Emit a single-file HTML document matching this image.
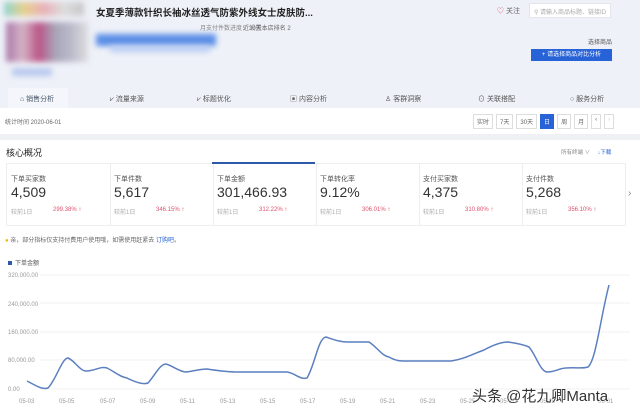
<!DOCTYPE html><html><head><meta charset="utf-8"><style>
*{margin:0;padding:0;box-sizing:border-box}
body{width:640px;height:413px;overflow:hidden;background:#fff;font-family:"Liberation Sans","Noto Sans CJK SC",sans-serif;color:#333;position:relative}
.a{position:absolute;white-space:nowrap}
.blk{position:absolute;filter:blur(3px)}
</style></head><body>
<div class="a" style="left:0;top:0;width:640px;height:108px;background:#eef1f8"></div>
<div class="blk" style="left:4px;top:2px;width:80px;height:14px;background:linear-gradient(90deg,#8fd3cf,#e6d08c,#e8b0b8,#ddd,#c7c7c7)"></div>
<div class="blk" style="left:6px;top:22px;width:82px;height:40px;background:linear-gradient(90deg,#a7a,#d5b5c5,#b58,#a8a5b8,#bbc,#ddd)"></div>
<div class="blk" style="left:12px;top:68px;width:40px;height:8px;background:#b8c8ee"></div>
<div class="blk" style="left:96px;top:34px;width:120px;height:12px;background:#5b8ee6"></div>
<div class="blk" style="left:110px;top:46px;width:100px;height:6px;background:#b8ccf3"></div>
<div class="a" style="left:96px;top:5px;font-size:9.5px;font-weight:bold;color:#222">女夏季薄款针织长袖冰丝透气防紫外线女士皮肤防...</div>
<div class="a" style="left:200px;top:23px;font-size:6px;color:#888">月支付件数进度： 设置</div>
<div class="a" style="left:243px;top:23px;font-size:6px;color:#666">近30天本店排名 2</div>
<div class="a" style="left:497px;top:6px;font-size:7px;color:#d55">♡ <span style="color:#666">关注</span></div>
<div class="a" style="left:529px;top:3px;width:82px;height:15px;background:#fff;border:1px solid #e4e6ec;font-size:6px;color:#aaa;padding:3px 4px">⚲ 请输入商品标题、链接ID</div>
<div class="a" style="left:588px;top:37px;font-size:6px;color:#555">选择商品</div>
<div class="a" style="left:531px;top:49px;width:81px;height:12px;background:#2762d7;color:#fff;font-size:6px;text-align:center;line-height:12px">+ 请选择商品对比分析</div>
<div class="a" style="left:8px;top:88px;width:60px;height:20px;background:#f4f6fb"></div>
<div class="a" style="top:94px;left:20px;font-size:7px;color:#456">⌂ 销售分析</div>
<div class="a" style="top:94px;left:110px;font-size:7px;color:#555">⩗ 流量来源</div>
<div class="a" style="top:94px;left:197px;font-size:7px;color:#555">⩗ 标题优化</div>
<div class="a" style="top:94px;left:290px;font-size:7px;color:#555">▣ 内容分析</div>
<div class="a" style="top:94px;left:385px;font-size:7px;color:#555">♙ 客群洞察</div>
<div class="a" style="top:94px;left:478px;font-size:7px;color:#555">⊙ 关联搭配</div>
<div class="a" style="top:94px;left:570px;font-size:7px;color:#555">○ 服务分析</div>
<div class="a" style="left:5px;top:117px;font-size:6px;color:#666">统计时间 2020-06-01</div>
<div class="a" style="left:473px;top:114px;font-size:6px;color:#666;display:flex;gap:3px">
<span style="border:1px solid #ddd;padding:2px 3px">实时</span><span style="border:1px solid #ddd;padding:2px 3px">7天</span><span style="border:1px solid #ddd;padding:2px 3px">30天</span><span style="background:#2762d7;color:#fff;padding:3px 4px">日</span><span style="border:1px solid #ddd;padding:2px 3px">周</span><span style="border:1px solid #ddd;padding:2px 3px">月</span><span style="border:1px solid #ddd;padding:2px 3px">‹</span><span style="border:1px solid #ddd;padding:2px 3px;color:#ccc">›</span></div>
<div class="a" style="left:0;top:134px;width:640px;height:6px;background:#f0f1f4"></div>
<div class="a" style="left:6px;top:146px;font-size:9px;color:#222">核心概况</div>
<div class="a" style="left:561px;top:148px;font-size:5.5px;color:#888">所有终端 ∨ <span style="color:#2762d7;margin-left:6px">↓下载</span></div>
<div class="a" style="left:6px;top:163px;width:620px;height:63px;border:1px solid #eee"></div>
<div class="a" style="left:212px;top:162px;width:103px;height:2px;background:#2d5aa8"></div>
<div id="cards"></div>
<div class="a" style="left:628px;top:188px;font-size:10px;color:#888">›</div>
<div class="a" style="left:5px;top:235px;font-size:6px;color:#666"><span style="color:#f4b400">●</span> 亲，部分指标仅支持付费用户使用哦，如需使用赶紧去 <span style="color:#2762d7">订购吧</span>。</div>
<div class="a" style="left:8px;top:258px;font-size:6px;color:#555"><span style="display:inline-block;width:4px;height:4px;background:#2d5aa8;margin-right:3px"></span>下单金额</div>
<svg class="a" style="left:0;top:0" width="640" height="413">
<g stroke="#f2f2f2" stroke-width="1"><line x1="40" y1="275" x2="630" y2="275"/><line x1="40" y1="303" x2="630" y2="303"/><line x1="40" y1="332" x2="630" y2="332"/><line x1="40" y1="360" x2="630" y2="360"/><line x1="40" y1="389" x2="630" y2="389"/></g>
<g font-size="6" fill="#999" font-family="Liberation Sans"><text x="8" y="277">320,000.00</text><text x="8" y="306">240,000.00</text><text x="8" y="334">160,000.00</text><text x="8" y="362">80,000.00</text><text x="8" y="391">0.00</text>
<text x="19" y="403">05-03</text><text x="59" y="403">05-05</text><text x="100" y="403">05-07</text><text x="140" y="403">05-09</text><text x="180" y="403">05-11</text><text x="220" y="403">05-13</text><text x="260" y="403">05-15</text><text x="300" y="403">05-17</text><text x="340" y="403">05-19</text><text x="380" y="403">05-21</text><text x="420" y="403">05-23</text><text x="460" y="403">05-25</text><text x="500" y="403">05-27</text><text x="540" y="403">05-29</text><text x="598" y="403">06-01</text></g>
<path fill="none" stroke="#5b7fbf" stroke-width="1.5" stroke-linejoin="round" d="M27 381 C35 385 42 390 48 388 C56 380 62 358 68 358 C74 360 80 371 86 371 C95 371 100 366 107 368 C115 372 120 377 127 378 C135 382 143 385 148 383 C155 375 160 364 166 364 C173 366 180 372 186 372 C195 371 200 369 207 369 C220 371 230 372 238 372 L287 372 C295 373 300 380 307 378 C315 365 318 338 326 337 C335 340 340 342 348 342 L369 342 C378 348 382 356 389 357 C396 361 400 361 406 361 L451 361 C465 359 475 353 484 350 C495 344 502 342 508 342 C515 343 522 344 529 347 C536 355 540 371 547 372 C555 372 560 368 566 368 C575 367 582 369 588 367 C596 360 600 320 609 285"/>
</svg>
<div class="a" style="left:472px;top:385px;font-size:15px;color:#333;text-shadow:0 0 2px #fff,0 0 2px #fff">头条 @花九卿Manta</div>
<script>
var d=[["下单买家数","4,509","299.38%"],["下单件数","5,617","346.15%"],["下单金额","301,466.93","312.22%"],["下单转化率","9.12%","306.01%"],["支付买家数","4,375","310.80%"],["支付件数","5,268","356.10%"]];
var h="";d.forEach(function(c,i){var x=8+i*103;h+='<div class="a" style="left:'+x+'px;top:164px;width:103px;height:61px;border-right:1px solid #eee"></div><div class="a" style="left:'+(x+3)+'px;top:174px;font-size:7px;color:#555">'+c[0]+'</div><div class="a" style="left:'+(x+3)+'px;top:184px;font-size:14px;color:#333">'+c[1]+'</div><div class="a" style="left:'+(x+3)+'px;top:207px;font-size:6px;color:#aaa">较前1日</div><div class="a" style="left:'+(x+45)+'px;top:207px;font-size:6px;color:#e0506e">'+c[2]+' <b style="color:#d33">↑</b></div>';});
document.getElementById("cards").innerHTML=h;
</script>
</body></html>
